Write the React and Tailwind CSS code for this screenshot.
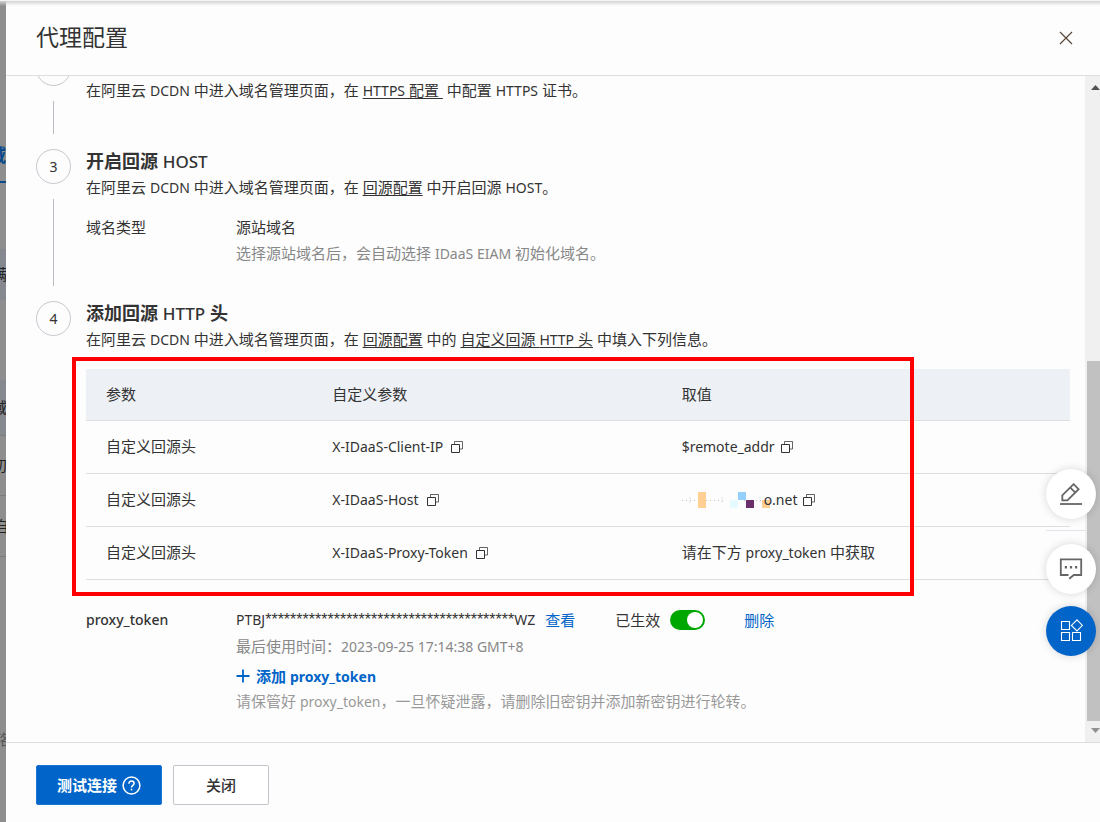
import React, { useState } from 'react';

// Latin runs are set one step smaller than the surrounding Chinese text
const En = ({ children }) => <span className="text-[14px] leading-none">{children}</span>;

const CopyIcon = () => (
  <svg width="12" height="12" viewBox="0 0 12 12" fill="none" stroke="currentColor" aria-hidden="true">
    <path d="M0.5 3.5h8v8h-8z" />
    <path d="M3.5 3.5v-3h8v7.5h-3" strokeOpacity="0.75" />
  </svg>
);

const CopyButton = ({ label }) => (
  <button type="button" aria-label={`复制 ${label}`} className="text-[#333]">
    <CopyIcon />
  </button>
);

const CloseIcon = () => (
  <svg width="14" height="14" viewBox="0 0 14 14" fill="none" stroke="#5a4636" strokeWidth="1.2" aria-hidden="true">
    <path d="M1 1l12 12M13 1L1 13" />
  </svg>
);

const PlusIcon = () => (
  <svg width="14" height="14" viewBox="0 0 14 14" fill="none" stroke="currentColor" strokeWidth="1.8" aria-hidden="true">
    <path d="M7 0.5v13M0.5 7h13" />
  </svg>
);

const HelpIcon = () => (
  <svg width="19" height="19" viewBox="0 0 19 19" fill="none" stroke="currentColor" strokeWidth="1.5" aria-hidden="true">
    <circle cx="9.5" cy="9.5" r="8.4" />
    <path d="M6.9 7.7c0-1.6 1.1-2.6 2.6-2.6s2.6 1 2.6 2.3c0 1.9-2.6 1.9-2.6 4" />
    <path d="M9.5 12.7v1.7" />
  </svg>
);

const EditIcon = () => (
  <svg width="22" height="22" viewBox="0 0 22 22" fill="none" stroke="#666" strokeWidth="1.8" aria-hidden="true">
    <path d="M2.3 17.3v-5L13.6 1.2l5 5L7.4 17.3z" />
    <path d="M10.3 4.6l5 5" />
    <path d="M0 21h22" />
  </svg>
);

const ChatIcon = () => (
  <svg width="24" height="22" viewBox="0 0 24 22" fill="none" stroke="#666" strokeWidth="1.8" aria-hidden="true">
    <path d="M9.5 17H1.8V1.3h20.4V17h-7.4l-4.6 3.8" />
    <path d="M5.8 9.3h2.2M10.9 9.3h2.2M16 9.3h2.2" strokeWidth="2.4" />
  </svg>
);

const AppsIcon = () => (
  <svg width="23" height="25" viewBox="0 0 23 25" fill="none" stroke="#fff" strokeWidth="1.1" aria-hidden="true">
    <path d="M1.5 2.5h8v8h-8zM1.5 13.5h8v8h-8zM12.5 13.5h8v8h-8zM17 0.8l5.4 5.6-5.4 5.6-5.6-5.6z" />
  </svg>
);

// Masked part of the host name
const Mosaic = () => (
  <svg width="90" height="18" viewBox="0 0 90 18" aria-hidden="true">
    <path d="M0 9.5h42M62 9.5h20" stroke="#c4c4c4" strokeDasharray="1 3" />
    <path d="M8 6v7M40 6v6M78 6v5" stroke="#ddd" strokeDasharray="2 2" />
    <path d="M16 1h8v16h-8zM80 9h8v8h-8z" fill="#ffcf94" />
    <path d="M48 9h8v8h-8z" fill="#e6fbff" />
    <path d="M56 1h8v8h-8z" fill="#94d1ff" />
    <path d="M64 9h8v8h-8z" fill="#6b306b" />
  </svg>
);

const DocLink = ({ children }) => (
  <a href="#" className="underline underline-offset-2">{children}</a>
);

const TitleEn = ({ children }) => (
  <span className="text-[17px] leading-none font-medium">{children}</span>
);

const Step = ({ number, title, last, children }) => (
  <li className="flex">
    <div className="flex w-[35px] shrink-0 flex-col items-center">
      <div className="flex size-[35px] shrink-0 items-center justify-center rounded-full border border-[#c5c8cf] text-[14px]">
        {number}
      </div>
      {!last && <div className="my-[15px] w-px flex-1 bg-[#b9bcc4]" />}
    </div>
    <div className="ml-[15px] min-w-0 flex-1">
      <h3 className="text-[18px] leading-[24px] font-bold">{title}</h3>
      {children}
    </div>
  </li>
);

const rows = [
  { param: 'X-IDaaS-Client-IP', value: <>$remote_addr <CopyButton label="$remote_addr" /></> },
  {
    param: 'X-IDaaS-Host',
    value: (
      <>
        <span className="flex items-center"><Mosaic /><span className="-ml-2">o.net</span></span>
        <CopyButton label="host" />
      </>
    ),
  },
  { param: 'X-IDaaS-Proxy-Token', value: <span className="text-[15px]">请在下方 <En>proxy_token</En> 中获取</span> },
];

const HeaderTable = () => (
  <div className="relative mt-[17px]">
    <table className="w-full table-fixed border-collapse text-left">
      <thead>
        <tr className="h-[51px] border-b border-[#dedede] bg-[#edf1f6]">
          <th className="w-[23%] pl-5 font-normal">参数</th>
          <th className="w-[35.5%] pl-5 font-normal">自定义参数</th>
          <th className="pl-5 font-normal">取值</th>
        </tr>
      </thead>
      <tbody>
        {rows.map((row) => (
          <tr key={row.param} className="h-[53px] border-b border-[#dedede]">
            <td className="pl-5">自定义回源头</td>
            <td className="pl-5 text-[14px]">
              <div className="flex items-center gap-2">
                {row.param}
                <CopyButton label={row.param} />
              </div>
            </td>
            <td className="pl-5 text-[14px]">
              <div className="flex items-center gap-1.5">{row.value}</div>
            </td>
          </tr>
        ))}
      </tbody>
    </table>
    <div className="pointer-events-none absolute -top-3 right-[156px] -bottom-4 -left-3.5 border-4 border-[#ff0000]" />
  </div>
);

const TokenRow = () => {
  const [enabled, setEnabled] = useState(true);
  return (
    <div className="mt-[27px] flex leading-[26px]">
      <div className="w-[150px] shrink-0 text-[14px] font-medium">proxy_token</div>
      <div>
        <div className="flex items-center">
          <span className="text-[14px]">
            PTBJ
            <span className="font-['Liberation_Sans',sans-serif] text-[16px] leading-none">****************************************</span>
            WZ
          </span>
          <a href="#" className="ml-2.5 text-[#0064c8]">查看</a>
          <label htmlFor="token-enabled" className="ml-10">已生效</label>
          <input
            id="token-enabled"
            type="checkbox"
            role="switch"
            checked={enabled}
            onChange={(e) => setEnabled(e.target.checked)}
            className="ml-2.5 flex h-5 w-[35px] appearance-none items-center rounded-full bg-[#bbb] px-0.5 before:size-4 before:rounded-full before:bg-white checked:justify-end checked:bg-[#00a700]"
          />
          <a href="#" className="ml-[39px] text-[#0064c8]">删除</a>
        </div>
        <p className="text-[#888]">最后使用时间：<En>2023-09-25 17:14:38 GMT+8</En></p>
        <button type="button" className="mt-[5px] flex items-center gap-1.5 leading-6 font-bold text-[#0064c8]">
          <PlusIcon />
          <span>添加 <En>proxy_token</En></span>
        </button>
        <p className="text-[#999]">请保管好 <En>proxy_token</En>，一旦怀疑泄露，请删除旧密钥并添加新密钥进行轮转。</p>
      </div>
    </div>
  );
};

// Dimmed page that shows at the left of the drawer
const PageBehind = () => (
  <div aria-hidden="true" className="w-1.5 shrink-0 overflow-hidden bg-[#8e8e8e] pt-[142px] text-[#222] *:flex *:items-center *:whitespace-nowrap">
    <div className="h-[26px] text-[18px] font-bold text-[#0a4a8c]"><span className="-ml-3">域</span></div>
    <div className="mt-[13px] h-0.5 bg-[#0a4a8c]" />
    <div className="mt-[66px] h-[51px] bg-[#85888f]"><span className="-ml-2">满</span></div>
    <div className="mt-20 h-[55px] bg-[#85888f]"><span className="-ml-2">域</span></div>
    <div className="h-[61px] border-y border-[#7c7c7c]"><span className="-ml-2">初</span></div>
    <div className="h-[61px] border-b border-[#7c7c7c]"><span className="-ml-1.5">自</span></div>
    <div className="mt-[168px] h-[28px] text-[#555]"><span className="-ml-1">洛</span></div>
  </div>
);

const ScrollRail = () => (
  <div aria-hidden="true" className="flex w-[15px] shrink-0 flex-col items-end overflow-hidden bg-[#f0f0f0]">
    <svg width="10" height="22" viewBox="0 0 10 22" fill="#505050"><path d="M1 14l4.5-5 4.5 5z" /></svg>
    <div className="flex-[263]" />
    <div className="w-[13px] flex-[360] bg-[#c1c1c1]" />
    <svg width="10" height="21" viewBox="0 0 10 21" fill="#909090"><path d="M1 7l4.5 5L10 7z" /></svg>
  </div>
);

const FloatingTools = () => (
  <div className="absolute top-[469px] right-1 flex flex-col items-center">
    <button type="button" aria-label="编辑" className="flex size-[50px] items-center justify-center rounded-full bg-white shadow-[0_0_8px_rgba(0,0,0,0.16)]">
      <EditIcon />
    </button>
    <div className="mt-[11px] mb-[13px] h-px w-10 self-start bg-[#e3e3ec]" />
    <button type="button" aria-label="反馈" className="flex size-[50px] items-center justify-center rounded-full bg-white shadow-[0_0_8px_rgba(0,0,0,0.16)]">
      <ChatIcon />
    </button>
    <button type="button" aria-label="应用" className="mt-3 flex size-[50px] items-center justify-center rounded-full bg-[#0064c8] shadow-[0_0_8px_rgba(0,0,0,0.16)]">
      <AppsIcon />
    </button>
  </div>
);

export default function App() {
  return (
    <div className="relative flex h-screen overflow-hidden bg-[#fdfdfd] font-['Noto_Sans','Noto_Sans_CJK_SC',sans-serif] text-[15px] text-[#333]" lang="zh-CN">
      <PageBehind />
      <section className="flex min-w-0 flex-1 flex-col">
        <header className="flex h-[76px] shrink-0 items-center justify-between border-b border-[#dedede] pr-[27px] pl-[30px]">
          <h2 className="text-[23px]">代理配置</h2>
          <button type="button" aria-label="关闭抽屉"><CloseIcon /></button>
        </header>

        <div className="flex min-h-0 flex-1">
          <div className="min-w-0 flex-1 overflow-hidden pr-[15px] pl-[30px]">
            <ol className="-mt-[25px]">
              <Step number={2} title={<>配置 <TitleEn>HTTPS</TitleEn></>}>
                <p className="mt-0.5 h-[72px] leading-[26px]">
                  在阿里云 <En>DCDN</En> 中进入域名管理页面，在 <DocLink><En>HTTPS</En> 配置&nbsp;</DocLink> 中配置 <En>HTTPS</En> 证书。
                </p>
              </Step>
              <Step number={3} title={<>开启回源 <TitleEn>HOST</TitleEn></>}>
                <p className="mt-px leading-[26px]">
                  在阿里云 <En>DCDN</En> 中进入域名管理页面，在 <DocLink>回源配置</DocLink> 中开启回源 <En>HOST</En>。
                </p>
                <div className="mt-3.5 flex pb-[35px] leading-[26px]">
                  <div className="w-[150px] shrink-0">域名类型</div>
                  <div>
                    <p>源站域名</p>
                    <p className="text-[#888]">选择源站域名后，会自动选择 <En>IDaaS EIAM</En> 初始化域名。</p>
                  </div>
                </div>
              </Step>
              <Step number={4} last title={<>添加回源 <TitleEn>HTTP</TitleEn> 头</>}>
                <p className="mt-px leading-[26px]">
                  在阿里云 <En>DCDN</En> 中进入域名管理页面，在 <DocLink>回源配置</DocLink> 中的 <DocLink>自定义回源 <En>HTTP</En> 头</DocLink> 中填入下列信息。
                </p>
                <HeaderTable />
                <TokenRow />
              </Step>
            </ol>
          </div>
          <ScrollRail />
        </div>

        <footer className="flex h-20 shrink-0 items-center gap-[11px] border-t border-[#dedede] pt-[5px] pl-[30px] [&>button]:h-10 [&>button]:rounded-xs">
          <button type="button" className="flex items-center gap-[5px] border border-[#1a76d2] bg-[#0064c8] px-5 font-bold text-white">
            测试连接 <HelpIcon />
          </button>
          <button type="button" className="border border-[#c0c6cc] bg-white px-8 font-medium">关闭</button>
        </footer>
      </section>
      <FloatingTools />
      <div aria-hidden="true" className="pointer-events-none absolute inset-x-0 top-0 h-1.5 border-t border-[#f4f4f4] bg-linear-to-b from-[#d2d5d3] to-transparent" />
    </div>
  );
}
